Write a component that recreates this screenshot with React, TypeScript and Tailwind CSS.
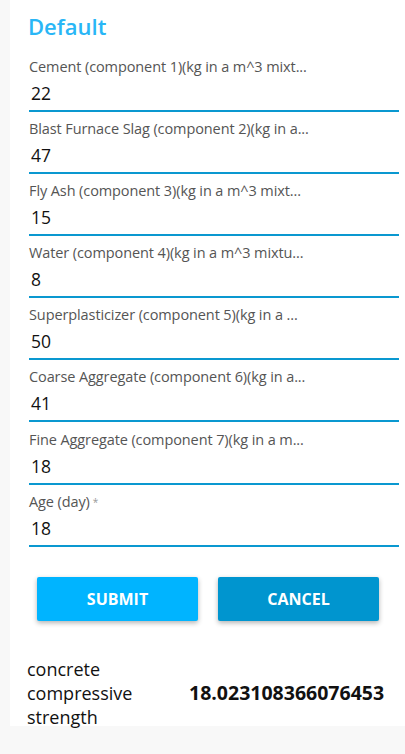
const fields = [
  { label: "Cement (component 1)(kg in a m^3 mixt...", value: "22" },
  { label: "Blast Furnace Slag (component 2)(kg in a...", value: "47" },
  { label: "Fly Ash (component 3)(kg in a m^3 mixt...", value: "15" },
  { label: "Water (component 4)(kg in a m^3 mixtu...", value: "8" },
  { label: "Superplasticizer (component 5)(kg in a ...", value: "50" },
  { label: "Coarse Aggregate (component 6)(kg in a...", value: "41" },
  { label: "Fine Aggregate (component 7)(kg in a m...", value: "18" },
  { label: "Age (day)", value: "18", required: true },
]

export default function App() {
  return (
    <div className="min-h-screen bg-[#f8f8f8] pl-[10px] font-['Open_Sans',sans-serif]">
      <div className="w-[395px] h-[726px] bg-white pl-[19px] pr-[6px]">
        <h1 className="pt-[11px] text-[22px] leading-[30px] font-semibold text-[#29b6f6] -ml-[1px]">Default</h1>
        <div className="mt-[16px] flex flex-col gap-[7.1px]">
          {fields.map((f) => (
            <div key={f.label} className="h-[55px] border-b-2 border-[#0a98d0] flex flex-col">
              <div className="text-[14.5px] leading-[20px] text-[#555] tracking-[-0.1px]">
                {f.label}
                {f.required && <span className="text-[10px] text-[#999] align-top ml-[3px]">*</span>}
              </div>
              <div className="mt-[4px] pl-[2px] text-[17.5px] leading-[24px] text-[#111]">{f.value}</div>
            </div>
          ))}
        </div>
        <div className="mt-[30px] flex gap-[20px] pl-[8px]">
          <button className="w-[161px] h-[44px] rounded-[2px] bg-[#00b4ff] text-white font-bold text-[16px] shadow-[0_2px_5px_rgba(0,0,0,0.3)]">SUBMIT</button>
          <button className="w-[161px] h-[44px] rounded-[2px] bg-[#0095cf] text-white font-bold text-[16px] shadow-[0_2px_5px_rgba(0,0,0,0.3)]">CANCEL</button>
        </div>
        <div className="mt-[36px] -ml-[2px] flex items-center">
          <div className="w-[162px] text-[18px] leading-[24px] text-[#111]">
            concrete<br />compressive<br />strength
          </div>
          <div className="text-[19.5px] font-bold text-[#111]">18.023108366076453</div>
        </div>
      </div>
    </div>
  )
}
